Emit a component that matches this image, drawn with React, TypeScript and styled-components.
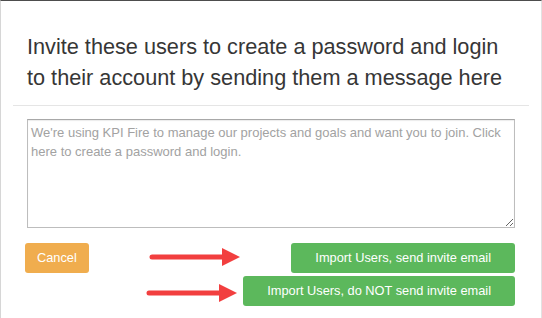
import styled, { createGlobalStyle } from 'styled-components';

const GlobalStyle = createGlobalStyle`
    html, body {
        margin: 0;
        padding: 0;
        background: #ffffff;
    }
    body {
        font-family: "Liberation Sans", Arial, Helvetica, sans-serif;
        color: #333333;
    }
`;

const Modal = styled.div`
    box-sizing: border-box;
    width: 542px;
    height: 318px;
    border-top: 1px solid #4d4d4d;
    border-left: 1px solid #d6d6d6;
    border-right: 1px solid #e2e2e2;
    padding: 0 12px;
    background: #ffffff;
`;

const Header = styled.div`
    padding: 30px 14px 12px;
    border-bottom: 1px solid #e5e5e5;
`;

const Title = styled.h4`
    margin: 0;
    font-size: 21.7px;
    line-height: 31px;
    font-weight: 400;
    color: #363636;
`;

const Body = styled.div`
    padding: 13px 14px 0;
`;

const Message = styled.textarea`
    display: block;
    box-sizing: border-box;
    width: 488px;
    height: 109px;
    margin: 0;
    padding: 3px;
    border: 1px solid #bdbdbd;
    border-top-color: #a8a8a8;
    box-shadow: inset 0 1px 1px rgba(0, 0, 0, 0.08);
    font-family: "Liberation Sans", Arial, sans-serif;
    font-size: 13px;
    line-height: 19px;
    color: #555555;
    outline: none;

    &::placeholder {
        color: #a2a2a2;
    }
`;

const Footer = styled.div`
    position: relative;
    display: flex;
    justify-content: space-between;
    align-items: flex-start;
    margin-top: 15px;
`;

const ButtonStack = styled.div`
    display: flex;
    flex-direction: column;
    align-items: flex-end;
    gap: 3px;
`;

const Button = styled.button<{ $tone: 'warning' | 'success' }>`
    height: 30px;
    padding: 0 ${(p) => (p.$tone === 'warning' ? '12px' : '24px')};
    margin-left: ${(p) => (p.$tone === 'warning' ? '-2px' : '0')};
    border: none;
    border-radius: 3px;
    background: ${(p) => (p.$tone === 'warning' ? '#f0ad4e' : '#5cb85c')};
    color: #ffffff;
    font-family: "Liberation Sans", Arial, sans-serif;
    font-size: 12.8px;
    line-height: 30px;
    cursor: pointer;
`;

const Arrow = styled.svg<{ $left: number; $top: number }>`
    position: absolute;
    left: ${(p) => p.$left}px;
    top: ${(p) => p.$top}px;
    width: 91px;
    height: 20px;
    overflow: visible;
`;

const RedArrow = ({ left, top }: { left: number; top: number }) => (
    <Arrow $left={left} $top={top} viewBox="0 0 91 20">
        <line x1="3" y1="10" x2="76" y2="10" stroke="#f23f3f" strokeWidth="5" strokeLinecap="round" />
        <polygon points="73,1 91,10 73,19" fill="#f23f3f" />
    </Arrow>
);

export default function App() {
    return (
        <>
            <GlobalStyle />
            <Modal>
                <Header>
                    <Title>Invite these users to create a password and login to their account by sending them a message here</Title>
                </Header>
                <Body>
                    <Message placeholder="We're using KPI Fire to manage our projects and goals and want you to join. Click here to create a password and login." />
                    <Footer>
                        <Button $tone="warning">Cancel</Button>
                        <ButtonStack>
                            <Button $tone="success">Import Users, send invite email</Button>
                            <Button $tone="success">Import Users, do NOT send invite email</Button>
                        </ButtonStack>
                        <RedArrow left={122} top={4} />
                        <RedArrow left={119} top={40} />
                    </Footer>
                </Body>
            </Modal>
        </>
    );
}
